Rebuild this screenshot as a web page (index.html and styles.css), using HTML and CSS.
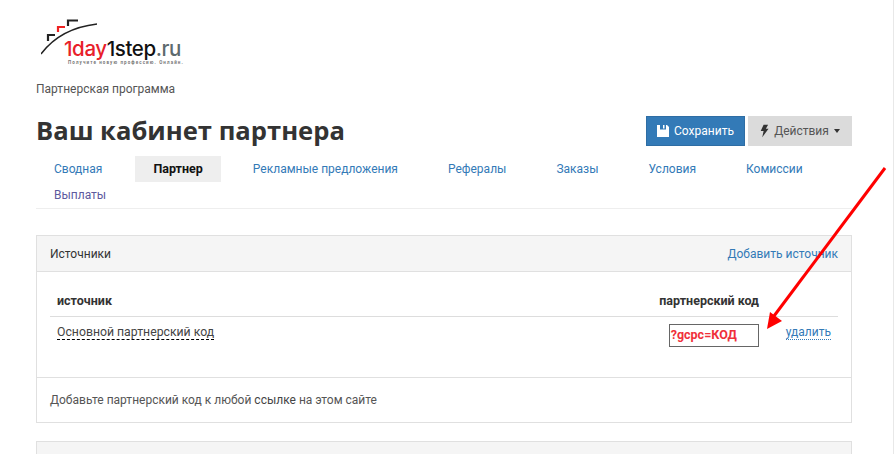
FILE: index.html
```html
<!DOCTYPE html>
<html lang="en">
<head>
  <meta charset="UTF-8" />
  <title>Ваш кабинет партнера</title>
  <link rel="stylesheet" href="styles.css">
</head>
<body>
  <div class="page">
    <div class="logo">
      <svg class="logo-mark" width="60" height="38" viewBox="0 0 60 38">
        <path d="M0 36 C12 20 30 9 56 6" fill="none" stroke="#222" stroke-width="1.4"/>
        <path d="M7 23 V17 H14" fill="none" stroke="#222" stroke-width="2.2"/>
        <path d="M17 14 V9 H24" fill="none" stroke="#e22" stroke-width="2.2"/>
        <path d="M27 8 V2.5 H37" fill="none" stroke="#222" stroke-width="2.2"/>
      </svg>
      <div class="logo-name"><span class="red">1day</span>1step<span class="grey">.ru</span></div>
      <div class="logo-sub">Получите новую профессию. Онлайн.</div>
    </div>

    <div class="breadcrumb">Партнерская программа</div>

    <div class="title-row">
      <h1>Ваш кабинет партнера</h1>
      <div class="actions">
        <button class="btn btn-primary">
          <svg width="12" height="12" viewBox="0 0 12 12"><path fill="#fff" fill-rule="evenodd" d="M0 0H10L12 2V12H0ZM3 0V4.5H9V0H7.5V3.5H6V0Z"/></svg>
          Сохранить
        </button>
        <button class="btn btn-default">
          <svg width="9" height="14" viewBox="0 0 10 14"><path fill="#333" d="M4 0H9L6.5 4.5H9.5L2.5 14L4 7H0.8Z"/></svg>
          Действия <span class="caret"></span>
        </button>
      </div>
    </div>

    <ul class="tabs">
      <li class="first"><a href="#">Сводная</a></li>
      <li class="active"><a href="#">Партнер</a></li>
      <li><a href="#">Рекламные предложения</a></li>
      <li><a href="#">Рефералы</a></li>
      <li><a href="#">Заказы</a></li>
      <li><a href="#">Условия</a></li>
      <li><a href="#">Комиссии</a></li>
      <li><a href="#" class="visited">Выплаты</a></li>
    </ul>

    <div class="panel">
      <div class="panel-heading">
        <span>Источники</span>
        <a href="#">Добавить источник</a>
      </div>
      <div class="panel-body">
        <div class="row row-head">
          <span>источник</span>
          <span class="code-head">партнерский код</span>
        </div>
        <div class="row row-item">
          <span class="source-name">Основной партнерский код</span>
          <span class="code-box">?gcpc=КОД</span>
          <a href="#" class="remove">удалить</a>
        </div>
      </div>
      <div class="panel-footer">Добавьте партнерский код к любой <a href="#" class="plain">ссылке</a> на этом сайте</div>
    </div>

    <div class="panel-next"></div>
  </div>

  <!-- red arrow drawn over the page -->
  <svg class="arrow" width="894" height="454" viewBox="0 0 894 454">
    <path d="M885 168 L774 316" stroke="#f00" stroke-width="3" fill="none"/>
    <path d="M767 329 L770 312 L782 321 Z" fill="#f00"/>
  </svg>
</body>
</html>
```

FILE: styles.css
```css
body {
  font-family: Roboto, 'Liberation Sans', sans-serif;
  font-size: 12px;
  line-height: 18px;
  margin: 0;
  background-color: #fff;
  color: #333;
  overflow: hidden;
  height: 454px;
  box-sizing: border-box;
  border-right: 1px solid #e8e8e8;
}
a {
  color: #337ab7;
  text-decoration: none;
}
.page {
  width: 816px;
  margin-left: 36px;
  height: 454px;
  overflow: hidden;
}
.logo {
  height: 79px;
  position: relative;
  box-sizing: border-box;
  padding-top: 38px;
}
.logo-mark {
  position: absolute;
  left: 5px;
  top: 18px;
}
.logo-name {
  margin-left: 28px;
  font-family: Inter, sans-serif;
  font-size: 20.5px;
  line-height: 22px;
  font-weight: 500;
  color: #111;
  letter-spacing: -0.4px;
}
.red { color: #e8202a; }
.grey { color: #5d6a6e; }
.logo-sub {
  margin-left: 32px;
  font-size: 4.5px;
  line-height: 6px;
  font-weight: 700;
  letter-spacing: 1.1px;
  color: #777;
  white-space: nowrap;
}
.breadcrumb {
  height: 37px;
  padding-top: 1px;
  box-sizing: border-box;
  color: #555;
}
.title-row {
  display: flex;
  justify-content: space-between;
  align-items: flex-start;
  height: 40px;
}
h1 {
  margin: 0;
  font-family: 'Open Sans', sans-serif;
  font-size: 25.6px;
  line-height: 30px;
  font-weight: 700;
  color: #333;
}
.actions {
  display: flex;
  gap: 3px;
}
.btn {
  font: inherit;
  height: 30px;
  border: 1px solid transparent;
  padding: 0;
  display: flex;
  align-items: center;
  justify-content: center;
  gap: 5px;
}
.btn-primary {
  width: 99px;
  background-color: #337ab7;
  border-color: #2e6da4;
  color: #fff;
}
.btn-default {
  width: 104px;
  background-color: #dbdbdb;
  color: #555;
}
.caret {
  border-top: 4px solid #333;
  border-left: 3.5px solid transparent;
  border-right: 3.5px solid transparent;
}
.tabs {
  list-style: none;
  margin: 0;
  padding: 0;
  display: flex;
  flex-wrap: wrap;
  border-bottom: 1px solid #eee;
  height: 53px;
  box-sizing: border-box;
}
.tabs li {
  margin-right: 14px;
}
.tabs li.first {
  margin-right: 15px;
}
.tabs li a {
  display: block;
  padding: 0 18px;
  height: 26px;
  line-height: 26px;
}
.tabs li.active a {
  background-color: #eee;
  color: #111;
  font-size: 12.5px;
  font-weight: 700;
}
.tabs .visited { color: #5d5a9e; }
.panel {
  margin-top: 26px;
  border: 1px solid #e0e0e0;
}
.panel-heading {
  display: flex;
  justify-content: space-between;
  align-items: center;
  height: 36px;
  box-sizing: border-box;
  padding: 0 13px;
  background-color: #f5f5f5;
  border-bottom: 1px solid #e0e0e0;
}
.panel-body {
  padding: 19px 13px 0;
  height: 106px;
  box-sizing: border-box;
  border-bottom: 1px solid #e0e0e0;
}
.row {
  display: flex;
  padding: 0 7px;
}
.row-head {
  height: 26px;
  font-size: 12.5px;
  font-weight: 700;
  justify-content: space-between;
  align-items: center;
  padding-bottom: 6px;
  box-sizing: border-box;
  border-bottom: 1px solid #ddd;
}
.code-head { margin-right: 72px; }
.row-item {
  padding-top: 7px;
  align-items: flex-start;
}
.source-name {
  border-bottom: 1px dashed #000;
  font-size: 12.25px;
  line-height: 14px;
  margin-top: 1px;
  color: #444;
}
.code-box {
  margin-left: auto;
  width: 90px;
  height: 23px;
  box-sizing: border-box;
  border: 1px solid #666;
  padding-left: 1px;
  color: #f0303a;
  font-size: 12.5px;
  font-weight: 700;
  line-height: 20px;
}
.remove {
  margin-left: 27px;
  line-height: 14px;
  margin-top: 1px;
  border-bottom: 1px dotted #337ab7;
}
.panel-footer {
  padding: 13px 13px;
  height: 44px;
  box-sizing: border-box;
  color: #555;
}
.plain { color: #444; }
.panel-next {
  margin-top: 18px;
  height: 40px;
  border: 1px solid #e0e0e0;
  background-color: #f5f5f5;
}
.arrow {
  position: absolute;
  left: 0;
  top: 0;
  pointer-events: none;
}
```
